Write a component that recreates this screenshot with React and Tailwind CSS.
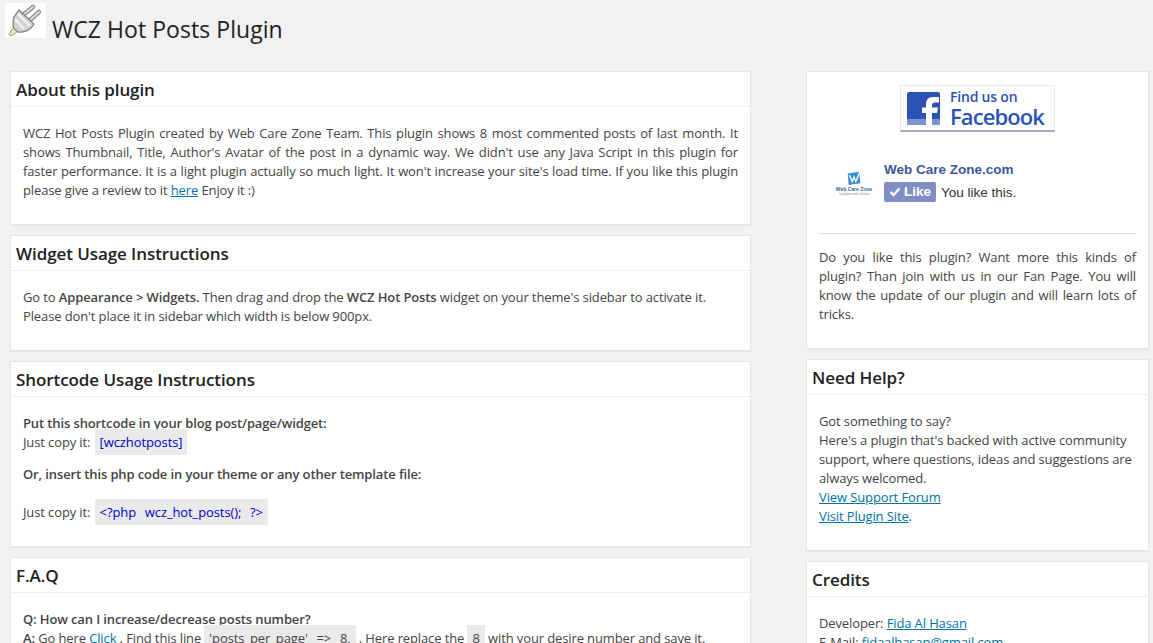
const Card = ({ title, children, className = "" }) => (
  <section className={"bg-white border border-[#e5e5e5] shadow-[0_1px_1px_rgba(0,0,0,0.04)] " + className}>
    {title && (
      <h3 className="h-[35px] border-b border-[#eeeeee] pl-[5px] text-[17px] leading-[36px] font-semibold tracking-[-0.08px] text-[#222222]">{title}</h3>
    )}
    {children}
  </section>
);

const Code = ({ children, className = "" }) => (
  <code className={"bg-[#eaeaea] px-[5px] py-[4px] font-['Open_Sans',sans-serif] text-[13px] leading-[19px] tracking-[-0.1px] [word-spacing:5.5px] " + className}>{children}</code>
);

const A = ({ children }) => <a className="text-[#0074a2] underline">{children}</a>;

const Plug = () => (
  <svg width="41" height="35" viewBox="0 0 41 35" className="block bg-white">
    <rect width="41" height="35" fill="#fff" />
    <path d="M18 12 L28 4 M23 19 L34 9" stroke="#8e8e8e" strokeWidth="4.500" strokeLinecap="round" />
    <path d="M18 12 L28 4 M23 19 L34 9" stroke="#dedede" strokeWidth="2" strokeLinecap="round" />
    <path d="M14 7 L29 21 L26 25 Q20 30 13 29 L9 26 Q7 20 9 14Z" fill="#d2d2d2" stroke="#7f7f7f" strokeWidth="1.200" />
    <path d="M13 11 L25 23 M10 16 L19 26" stroke="#f6f6f6" strokeWidth="2" />
    <path d="M8 25 L12 29 L6 33 L4 31Z" fill="#e6e6c4" stroke="#9d9d80" strokeWidth="1" />
  </svg>
);

const FbBanner = () => (
  <div className="w-[155px] h-[47px] border border-[#e9e9ef] border-b-2 border-b-[#a9a9c6] bg-white flex items-center pl-[6px] gap-[10px] mx-auto">
    <svg width="33" height="33" viewBox="0 0 33 33" className="shrink-0">
      <rect width="33" height="33" rx="2" fill="#2b53b5" />
      <rect y="27" width="33" height="6" rx="1" fill="#7f93cf" />
      <path d="M19 33V21H15V15.500H19V12Q19 5 26 5H32V10.500H28Q25 10.500 25 13V15.500H31L30 21H25V33Z" fill="#fff" />
    </svg>
    <div className="text-[#2b53b5] whitespace-nowrap pt-[2px]">
      <div className="text-[14px] leading-[15px] font-semibold tracking-[-0.2px]">Find us on</div>
      <div className="text-[22px] leading-[25px] font-semibold tracking-[-0.9px]">Facebook</div>
    </div>
  </div>
);

const WczLogo = () => (
  <div className="w-[50px] h-[50px] flex flex-col items-center pt-[12px]">
    <svg width="16" height="16" viewBox="0 0 18 18">
      <path d="M2 4 L15 2 L16 15 L3 17Z" fill="#3f8fd6" />
      <path d="M4 6 L7 13 L9 8 L11 13 L16 1" fill="none" stroke="#fff" strokeWidth="1.500" />
    </svg>
    <div className="text-[5px] leading-[6px] font-bold text-[#36658f] whitespace-nowrap">Web Care Zone</div>
    <div className="text-[3px] leading-[4px] text-[#888888] whitespace-nowrap">Complete web solution</div>
  </div>
);

export default function App() {
  return (
    <div className="h-[643px] w-[1153px] overflow-hidden bg-[#f1f1f1] font-['Open_Sans',sans-serif] text-[13px] leading-[19px] tracking-[-0.12px] text-[#444444]">
      <header className="h-[71px] flex items-start pt-[3px] pl-[5px]">
        <Plug />
        <h1 className="ml-[6px] mt-[8px] text-[23px] leading-[36px] tracking-[0.05px] text-[#222222]">WCZ Hot Posts Plugin</h1>
      </header>
      <div className="flex pl-[10px] pr-[4px] justify-between items-start">
        <main className="w-[741px] flex flex-col gap-[10px]">
          <Card title="About this plugin" className="h-[154px]">
            <p className="px-[12px] pt-[17px] text-justify">
              WCZ Hot Posts Plugin created by Web Care Zone Team. This plugin shows 8 most commented posts of last month. It shows Thumbnail, Title, Author's Avatar of the post in a dynamic way. We didn't use any Java Script in this plugin for faster performance. It is a light plugin actually so much light. It won't increase your site's load time. If you like this plugin please give a review to it <A>here</A> Enjoy it :)
            </p>
          </Card>
          <Card title="Widget Usage Instructions" className="h-[116px]">
            <p className="px-[12px] pt-[17px]">
              Go to <b className="font-semibold">Appearance &gt; Widgets.</b> Then drag and drop the <b className="font-semibold">WCZ Hot Posts</b> widget on your theme's sidebar to activate it. Please don't place it in sidebar which width is below 900px.
            </p>
          </Card>
          <Card title="Shortcode Usage Instructions" className="h-[186px]">
            <div className="px-[12px] pt-[17px]">
              <p className="font-semibold">Put this shortcode in your blog post/page/widget:</p>
              <p>Just copy it: <Code className="text-[#0000cc] ml-[1px]">[wczhotposts]</Code></p>
              <p className="font-semibold mt-[13px]">Or, insert this php code in your theme or any other template file:</p>
              <p className="mt-[19px]">Just copy it: <Code className="text-[#0000cc] ml-[1px]">&lt;?php wcz_hot_posts(); ?&gt;</Code></p>
            </div>
          </Card>
          <Card title="F.A.Q" className="h-[200px]">
            <div className="px-[12px] pt-[17px]">
              <p className="font-semibold">Q: How can I increase/decrease posts number?</p>
              <p><b className="font-semibold">A:</b> Go here <span className="text-[#0074a2]">Click</span> . Find this line <Code>'posts_per_page' =&gt; 8,</Code> . Here replace the <Code>8</Code> with your desire number and save it.</p>
            </div>
          </Card>
        </main>
        <aside className="w-[343px] flex flex-col gap-[10px]">
          <Card className="h-[278px] px-[12px]">
            <div className="pt-[13px]"><FbBanner /></div>
            <div className="flex mt-[26px] pl-[10px] h-[50px] gap-[5px] font-['Liberation_Sans',sans-serif] tracking-normal">
              <WczLogo />
              <div className="mt-[3px]">
                <div className="text-[13.500px] leading-[18px] font-bold text-[#3b5998]">Web Care Zone.com</div>
                <div className="flex items-center mt-[3px] gap-[5px] text-[13.500px] text-[#333333]">
                  <span className="h-[20px] w-[52px] rounded-[2px] bg-[#7f8fc4] text-white font-bold flex items-center justify-center gap-[3px] leading-none">
                    <svg width="12" height="10" viewBox="0 0 12 10"><path d="M1.500 5L4.500 8L10.500 1.500" fill="none" stroke="#fff" strokeWidth="2.400" /></svg>
                    Like
                  </span>
                  You like this.
                </div>
              </div>
            </div>
            <div className="border-t border-[#dddddd] mt-[25px]" />
            <p className="mt-[14px] text-justify">
              Do you like this plugin? Want more this kinds of plugin? Than join with us in our Fan Page. You will know the update of our plugin and will learn lots of tricks.
            </p>
          </Card>
          <Card title="Need Help?" className="h-[192px]">
            <p className="px-[12px] pt-[17px]">
              Got something to say?<br />
              Here's a plugin that's backed with active community support, where questions, ideas and suggestions are always welcomed.<br />
              <A>View Support Forum</A><br />
              <A>Visit Plugin Site</A>.
            </p>
          </Card>
          <Card title="Credits" className="h-[200px]">
            <p className="px-[12px] pt-[17px]">
              Developer: <A>Fida Al Hasan</A><br />
              E-Mail: <A>fidaalhasan@gmail.com</A>
            </p>
          </Card>
        </aside>
      </div>
    </div>
  );
}
